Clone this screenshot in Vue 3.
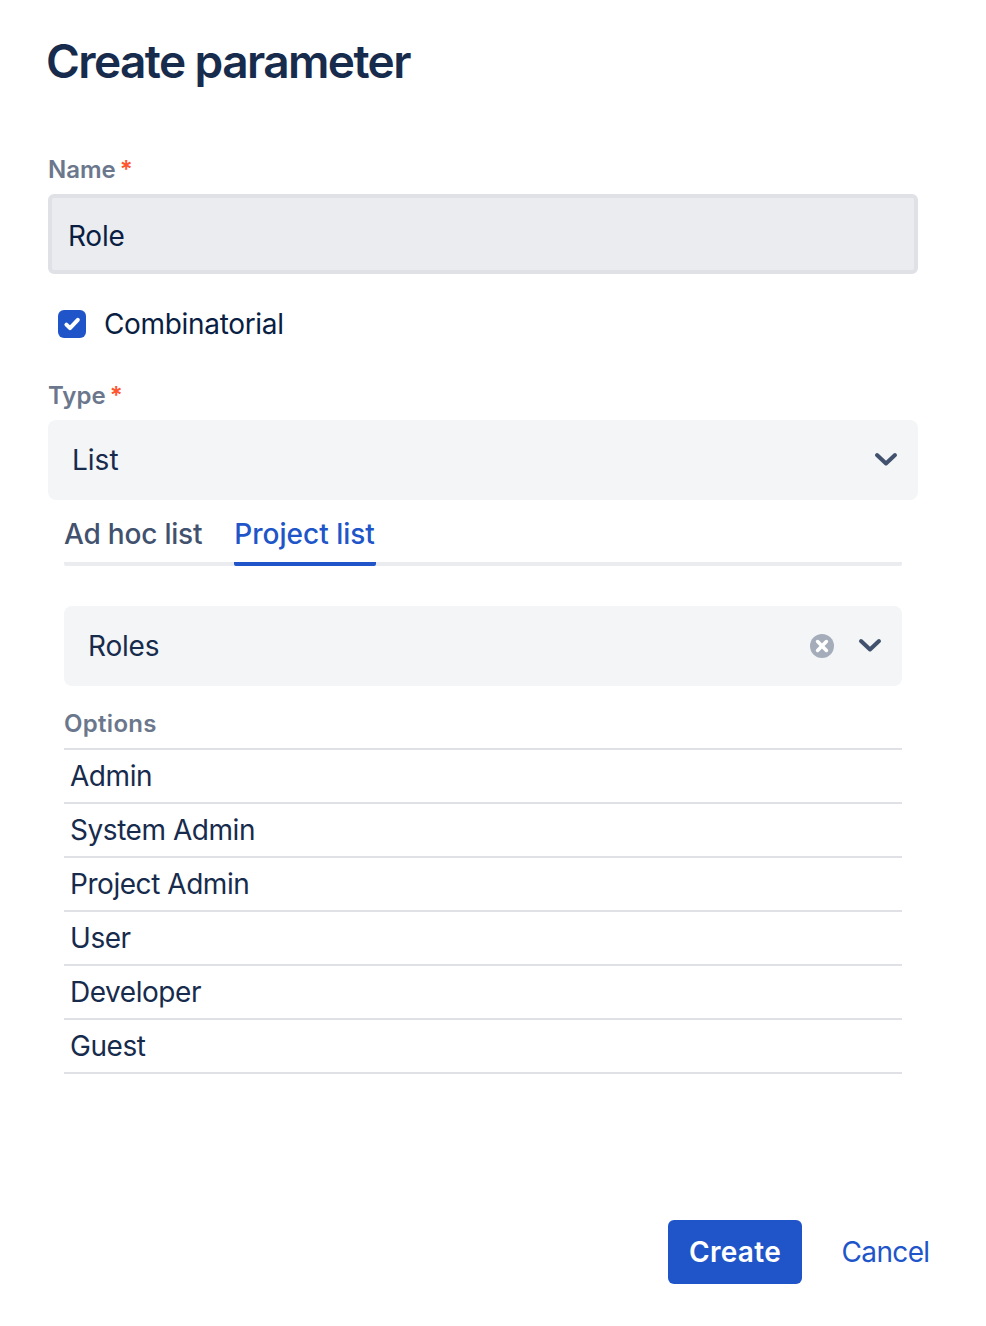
<script setup>
const options = ['Admin', 'System Admin', 'Project Admin', 'User', 'Developer', 'Guest']
</script>

<template>
  <div class="page">
    <h1 class="title">Create parameter</h1>

    <div class="label name-label">Name<span class="req">*</span></div>
    <div class="input">Role</div>

    <div class="check-row">
      <span class="checkbox">
        <svg width="28" height="28" viewBox="0 0 28 28">
          <path d="M8.4 14.6l3.6 3.6 7.8-8.4" fill="none" stroke="#fff" stroke-width="4" stroke-linecap="round" stroke-linejoin="round" />
        </svg>
      </span>
      <span class="check-text">Combinatorial</span>
    </div>

    <div class="label type-label">Type<span class="req">*</span></div>
    <div class="select type-select">
      <span>List</span>
      <svg class="chev" width="24" height="16" viewBox="0 0 24 16">
        <path d="M3 3L12 11.5l9-8.5" fill="none" stroke="#42526e" stroke-width="4" stroke-linecap="round" stroke-linejoin="round" />
      </svg>
    </div>

    <div class="section">
      <div class="tabs">
        <div class="tab plain">Ad hoc list</div>
        <div class="tab active">Project list</div>
      </div>

      <div class="select roles-select">
        <span class="roles-text">Roles</span>
        <span class="icons">
          <svg width="24" height="24" viewBox="0 0 24 24">
            <circle cx="12" cy="12" r="12" fill="#a5adba" />
            <path d="M7.6 7.6l8.8 8.8M16.4 7.6l-8.8 8.8" stroke="#fff" stroke-width="3.6" stroke-linecap="round" />
          </svg>
          <svg class="chev" width="24" height="16" viewBox="0 0 24 16">
            <path d="M3 3L12 11.5l9-8.5" fill="none" stroke="#42526e" stroke-width="4" stroke-linecap="round" stroke-linejoin="round" />
          </svg>
        </span>
      </div>

      <div class="label options-label">Options</div>
      <div class="options">
        <div v-for="o in options" :key="o" class="option">{{ o }}</div>
      </div>
    </div>

    <div class="actions">
      <button class="primary" type="button">Create</button>
      <button class="link" type="button">Cancel</button>
    </div>
  </div>
</template>

<style>
html, body { margin: 0; background: #fff; }
</style>

<style scoped>
.page {
  box-sizing: border-box;
  width: 986px;
  height: 1326px;
  padding: 0 68px 0 48px;
  font-family: Inter, "Liberation Sans", sans-serif;
  font-size: 28px;
  color: #172b4d;
  display: flex;
  flex-direction: column;
}
.title {
  margin: 31px 0 0 -2px;
  font-size: 46px;
  line-height: 60px;
  font-weight: 600;
  letter-spacing: -1.6px;
  color: #172b4d;
}
.label {
  font-size: 24px;
  line-height: 32px;
  font-weight: 600;
  color: #6b778c;
}
.name-label { margin-top: 63px; }
.type-label { margin-top: 42px; }
.req {
  color: #ff5630;
  margin-left: 4px;
  font-size: 24px;
}
.input {
  box-sizing: border-box;
  height: 80px;
  margin-top: 8px;
  border: 4px solid #dfe1e6;
  border-radius: 6px;
  background: #ebecf0;
  padding: 0 16px;
  line-height: 76px;
  color: #091e42;
  letter-spacing: -0.25px;
}
.check-row {
  display: flex;
  align-items: center;
  height: 28px;
  margin: 36px 0 0 10px;
}
.checkbox {
  width: 28px;
  height: 28px;
  border-radius: 6px;
  background: #2055c9;
  display: block;
}
.checkbox svg { display: block; }
.check-text {
  margin-left: 18px;
  color: #091e42;
  letter-spacing: -0.33px;
}
.select {
  box-sizing: border-box;
  height: 80px;
  border-radius: 8px;
  background: #f4f5f7;
  display: flex;
  align-items: center;
  justify-content: space-between;
}
.type-select { margin-top: 8px; padding: 0 20px 0 24px; }
.roles-select { margin-top: 40px; padding: 0 20px 0 24px; }
.roles-text { letter-spacing: -0.2px; }
.chev { display: block; }
.icons {
  display: flex;
  align-items: center;
  gap: 24px;
}
.icons svg { display: block; }
.section { margin: 0 16px; }
.tabs {
  display: flex;
  gap: 32px;
  height: 66px;
  box-sizing: border-box;
  border-bottom: 4px solid #ebecf0;
  border-radius: 2px;
}
.tab {
  height: 66px;
  box-sizing: border-box;
  padding-top: 16px;
  line-height: 36px;
  font-weight: 500;
  color: #42526e;
}
.tab.plain { letter-spacing: -0.2px; }
.tab.active {
  color: #2055c9;
  border-bottom: 4px solid #2055c9;
  border-radius: 2px;
  padding-right: 1px;
}
.options-label { margin-top: 22px; letter-spacing: 0.3px; }
.options { margin-top: 8px; border-top: 2px solid #dfe1e6; }
.option {
  box-sizing: border-box;
  height: 54px;
  line-height: 53px;
  padding-left: 6px;
  border-bottom: 2px solid #dfe1e6;
  letter-spacing: -0.45px;
}
.actions {
  margin-top: 146px;
  display: flex;
  justify-content: flex-end;
  align-items: center;
  margin-right: -12px;
  gap: 39px;
}
.primary, .link {
  font: inherit;
  border: 0;
  padding: 0;
  background: none;
}
.primary {
  width: 134px;
  height: 64px;
  border-radius: 6px;
  background: #2055c9;
  color: #fff;
  font-weight: 600;
  letter-spacing: 0.3px;
}
.link {
  color: #2055c9;
  width: 89px;
  letter-spacing: -0.65px;
  white-space: nowrap;
}
</style>
